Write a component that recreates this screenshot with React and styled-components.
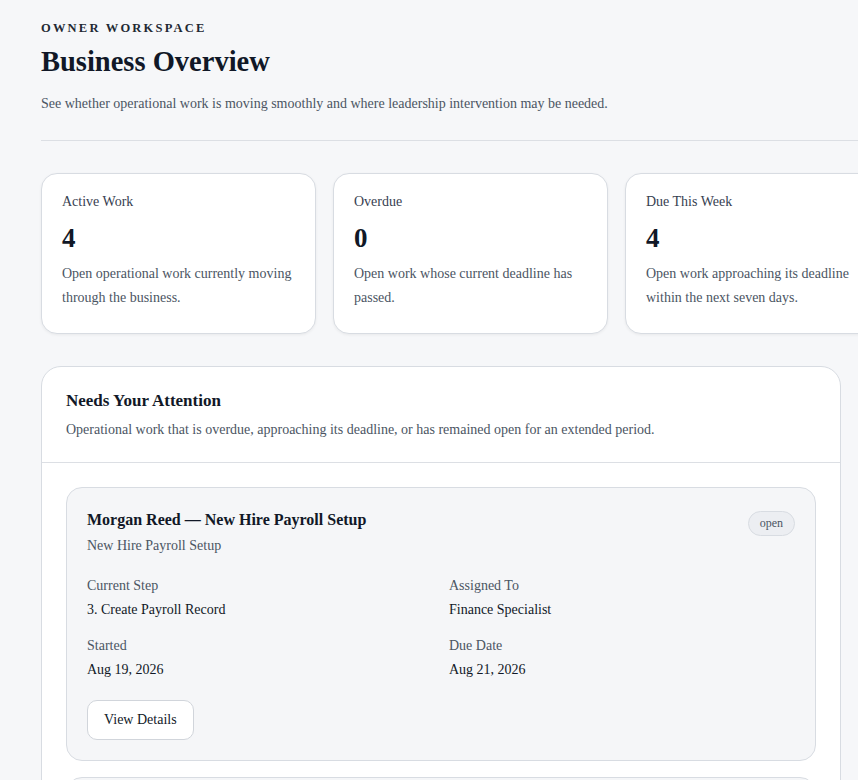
import styled, { createGlobalStyle } from 'styled-components';

const Global = createGlobalStyle`
  html, body { margin: 0; background: #f6f7f9; overflow: hidden; }
  body { font-family: "Liberation Serif", "Times New Roman", serif; color: #111827; }
`;

const Page = styled.div`
  padding: 21px 0 0 41px;
  width: 900px;
`;

const Eyebrow = styled.div`
  font-size: 12.5px;
  font-weight: 700;
  letter-spacing: 2.2px;
  color: #1f2933;
  text-transform: uppercase;
`;

const Title = styled.h1`
  margin: 8px 0 0;
  font-size: 28.5px;
  font-weight: 700;
  line-height: 36px;
`;

const Lead = styled.p`
  margin: 16px 0 0;
  font-size: 14px;
  color: #4b5563;
`;

const Divider = styled.hr`
  margin: 28px 0 32px;
  border: 0;
  border-top: 1px solid #dcdfe4;
  width: 817px;
`;

const Stats = styled.div`
  display: grid;
  grid-template-columns: repeat(3, 275px);
  gap: 17px;
`;

const StatCard = styled.div`
  background: #fff;
  border: 1px solid #d8dce2;
  border-radius: 16px;
  padding: 20px 20px 24px;
  height: 161px;
  box-sizing: border-box;
  box-shadow: 0 1px 3px rgba(0, 0, 0, 0.06);
`;

const StatLabel = styled.div`
  font-size: 14px;
  color: #374151;
`;

const StatValue = styled.div`
  font-size: 27px;
  font-weight: 700;
  margin-top: 12px;
  line-height: 32px;
`;

const StatText = styled.div`
  font-size: 14px;
  line-height: 24px;
  color: #4b5563;
  margin-top: 8px;
`;

const Panel = styled.section`
  margin-top: 32px;
  width: 800px;
  box-sizing: border-box;
  background: #fff;
  border: 1px solid #d8dce2;
  border-radius: 20px;
`;

const PanelHead = styled.div`
  padding: 24px 24px 24px;
  border-bottom: 1px solid #dcdfe4;
`;

const PanelTitle = styled.h2`
  margin: 0;
  font-size: 17px;
  font-weight: 700;
`;

const PanelText = styled.p`
  margin: 11px 0 0;
  font-size: 14px;
  color: #4b5563;
`;

const PanelBody = styled.div`
  padding: 24px 24px 0;
  display: flex;
  flex-direction: column;
  gap: 16px;
`;

const Item = styled.div`
  background: #f5f6f8;
  border: 1px solid #d8dce2;
  border-radius: 16px;
  padding: 23px 20px 20px;
`;

const ItemTop = styled.div`
  display: flex;
  justify-content: space-between;
  align-items: flex-start;
`;

const ItemTitle = styled.div`
  font-size: 16px;
  font-weight: 700;
`;

const ItemSub = styled.div`
  font-size: 14px;
  color: #4b5563;
  margin-top: 9px;
`;

const Badge = styled.span`
  font-size: 12px;
  color: #4b5563;
  background: #eceef2;
  border: 1px solid #d8dce2;
  border-radius: 999px;
  padding: 4px 11px;
`;

const Fields = styled.div`
  display: grid;
  grid-template-columns: 362px 1fr;
  row-gap: 20px;
  margin-top: 24px;
`;

const FieldLabel = styled.div`
  font-size: 14px;
  color: #4b5563;
`;

const FieldValue = styled.div`
  font-size: 14px;
  margin-top: 8px;
`;

const Button = styled.button`
  margin-top: 22px;
  font-family: inherit;
  font-size: 14px;
  color: #111827;
  background: #fff;
  border: 1px solid #d1d5db;
  border-radius: 10px;
  height: 40px;
  padding: 0 16px;
`;

const stats = [
  ['Active Work', '4', 'Open operational work currently moving through the business.'],
  ['Overdue', '0', 'Open work whose current deadline has passed.'],
  ['Due This Week', '4', 'Open work approaching its deadline within the next seven days.'],
];

const fields = [
  ['Current Step', '3. Create Payroll Record'],
  ['Assigned To', 'Finance Specialist'],
  ['Started', 'Aug 19, 2026'],
  ['Due Date', 'Aug 21, 2026'],
];

export default function App() {
  return (
    <Page>
      <Global />
      <Eyebrow>Owner Workspace</Eyebrow>
      <Title>Business Overview</Title>
      <Lead>See whether operational work is moving smoothly and where leadership intervention may be needed.</Lead>
      <Divider />
      <Stats>
        {stats.map(([l, v, t]) => (
          <StatCard key={l}>
            <StatLabel>{l}</StatLabel>
            <StatValue>{v}</StatValue>
            <StatText>{t}</StatText>
          </StatCard>
        ))}
      </Stats>
      <Panel>
        <PanelHead>
          <PanelTitle>Needs Your Attention</PanelTitle>
          <PanelText>Operational work that is overdue, approaching its deadline, or has remained open for an extended period.</PanelText>
        </PanelHead>
        <PanelBody>
          <Item>
            <ItemTop>
              <div>
                <ItemTitle>Morgan Reed — New Hire Payroll Setup</ItemTitle>
                <ItemSub>New Hire Payroll Setup</ItemSub>
              </div>
              <Badge>open</Badge>
            </ItemTop>
            <Fields>
              {fields.map(([l, v]) => (
                <div key={l}>
                  <FieldLabel>{l}</FieldLabel>
                  <FieldValue>{v}</FieldValue>
                </div>
              ))}
            </Fields>
            <Button>View Details</Button>
          </Item>
          <Item style={{ height: 60 }} />
        </PanelBody>
      </Panel>
    </Page>
  );
}
